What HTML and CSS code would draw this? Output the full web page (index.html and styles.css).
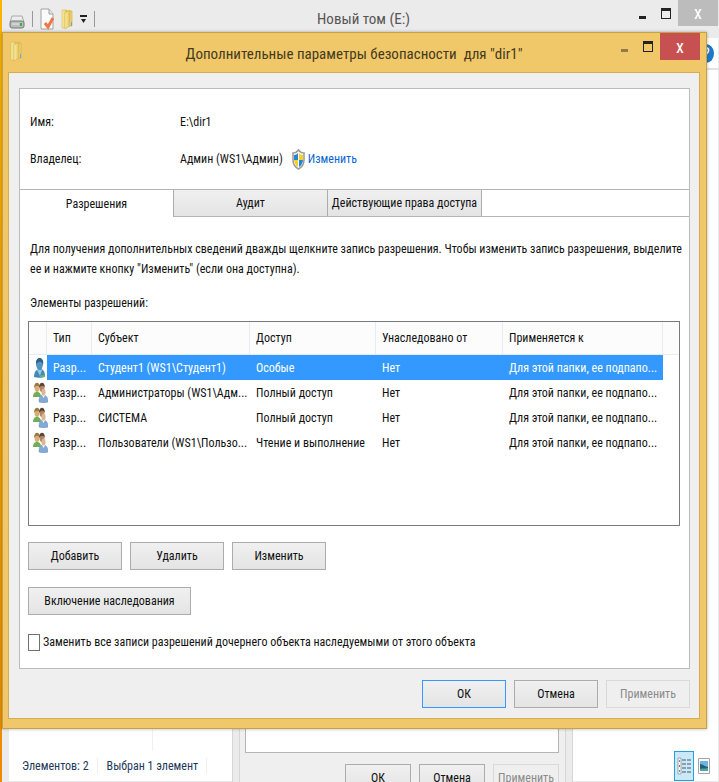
FILE: index.html
```html
<!DOCTYPE html>
<html lang="ru">

<head>
    <meta charset="UTF-8">
    <meta name="viewport" content="width=device-width, initial-scale=1.0">
    <title>Дополнительные параметры безопасности</title>
    <link rel="stylesheet" href="styles.css">
</head>

<body>
    <svg width="0" height="0" class="sprites">
        <defs>
            <linearGradient id="gold" x1="0" x2="1">
                <stop offset="0" stop-color="#fbf0a8" />
                <stop offset="1" stop-color="#e2bf55" />
            </linearGradient>
            <symbol id="folder" viewBox="0 0 12 21">
                <path d="M1 1h5v18H1z" fill="url(#gold)" stroke="#d9b95c" stroke-width=".6" />
                <path d="M6 2h5v15H6z" fill="#efd474" stroke="#d0a840" stroke-width=".6" />
                <path d="M4 4l5-3v16l-5 3z" fill="url(#gold)" stroke="#cfae4c" stroke-width=".5" />
                <path d="M10 13h1v4h-1z" fill="#6aaad8" />
            </symbol>
            <symbol id="group" viewBox="0 0 15 21">
                <path d="M0 15c0-4 2-5 4-5s4 1 4 5z" fill="#72ae56" />
                <ellipse cx="4" cy="6" rx="2.4" ry="4" fill="#d9ad76" />
                <path d="M1 6c0-7 6-7 6 0-1-3-4-3-6 0z" fill="#9a7a3a" />
                <ellipse cx="9" cy="6" rx="2.4" ry="4" fill="#b58463" />
                <path d="M6 6c0-7 6-7 6 0-1-3-4-3-6 0z" fill="#584434" />
                <path d="M6 20c0-5 1-7 4-7s5 2 5 7c-2 1-7 1-9 0z" fill="#83aad6" stroke="#5c84ad" stroke-width=".4" />
                <path d="M9 13l1.500 3 1.500-3z" fill="#fff" />
                <ellipse cx="10.500" cy="10" rx="2" ry="3.500" fill="#dcb78d" />
            </symbol>
        </defs>
    </svg>

    <div class="desktop">
        <section class="explorer">
            <header class="explorer-title">
                <div class="quick-bar">
                    <svg width="16" height="14" viewBox="0 0 16 14" class="drive">
                        <path d="M3 1h10l2 6H1z" fill="#ececec" stroke="#aaa" />
                        <rect x="1" y="6" width="14" height="7" rx="2" fill="#b9bcc0" stroke="#777" />
                        <path d="M3 9h7" stroke="#e9e9e9" />
                        <path d="M12 8v3" stroke="#36b832" stroke-width="2" />
                    </svg>
                    <i class="divider"></i>
                    <svg width="14" height="22" viewBox="0 0 14 22">
                        <path d="M1 1h8l4 5v15H1z" fill="#fafafa" stroke="#a2a2a2" />
                        <path d="M9 1v5h4" fill="#e3e3e3" stroke="#a2a2a2" />
                        <path d="M5 15l3 4 5-9" fill="none" stroke="#ed7846" stroke-width="3" />
                    </svg>
                    <svg width="12" height="21"><use href="#folder" /></svg>
                    <svg width="7" height="8" viewBox="0 0 7 8">
                        <path d="M0 1h7" stroke="#222" stroke-width="2" />
                        <path d="M1 4h5L3.500 8z" fill="#222" />
                    </svg>
                    <i class="divider"></i>
                </div>
                <span class="explorer-name">Новый том (E:)</span>
                <div class="window-buttons">
                    <button class="win-btn" aria-label="Свернуть"><i class="minimize"></i></button>
                    <button class="win-btn" aria-label="Развернуть"><i class="maximize"></i></button>
                    <button class="win-btn close" aria-label="Закрыть">x</button>
                </div>
            </header>
            <div class="ribbon">
                <button class="help" aria-label="Справка">?</button>
            </div>
            <div class="explorer-body">
                <div class="nav-pane"></div>
            </div>
            <footer class="status-bar">
                <span class="status-item">Элементов: 2</span>
                <span class="status-item">Выбран 1 элемент</span>
                <div class="view-modes">
                    <button class="view-btn selected" aria-label="Таблица">
                        <svg width="14" height="18" viewBox="0 0 14 18">
                            <path d="M1 1h3v16H1z" fill="#fff" stroke="#9aa7ad" />
                            <path d="M2 4h1M2 14h1" stroke="#7b8d95" stroke-width="2" />
                            <path d="M2 9h1" stroke="#e04f35" stroke-width="2" />
                            <path d="M5 3h9M5 7h9M5 11h9M5 15h9" stroke="#405b70" stroke-dasharray="4 1" />
                        </svg>
                    </button>
                    <button class="view-btn" aria-label="Крупные значки">
                        <svg width="12" height="16" viewBox="0 0 12 16">
                            <path d="M.5.5h11v15H.5z" fill="#fff" stroke="#9da6ac" />
                            <path d="M2 3h8v10H2z" fill="#6fb4e0" />
                            <path d="M2 6c3 0 5 3 8 3v4H2z" fill="#205f78" />
                            <path d="M2 11c3-1 5 0 8-1v3H2z" fill="#55a6a0" />
                        </svg>
                    </button>
                </div>
            </footer>
        </section>

        <section class="properties">
            <div class="properties-client">
                <div class="properties-page"></div>
                <div class="properties-actions">
                    <button class="btn">ОК</button>
                    <button class="btn">Отмена</button>
                    <button class="btn" disabled>Применить</button>
                </div>
            </div>
        </section>

        <section class="dialog">
            <header class="dialog-title">
                <svg width="12" height="21" class="dialog-icon"><use href="#folder" /></svg>
                <h1 class="dialog-name">Дополнительные параметры безопасности  для "dir1"</h1>
                <div class="window-buttons">
                    <button class="win-btn" aria-label="Свернуть"><i class="minimize faded"></i></button>
                    <button class="win-btn" aria-label="Развернуть"><i class="maximize"></i></button>
                    <button class="win-btn close" aria-label="Закрыть">x</button>
                </div>
            </header>

            <div class="client">
                <div class="panel">
                    <dl class="info">
                        <dt>Имя:</dt>
                        <dd>E:\dir1</dd>
                        <dt>Владелец:</dt>
                        <dd>
                            Админ (WS1\Админ)
                            <a class="change-link" href="#">
                                <svg width="13" height="21" viewBox="0 0 13 21">
                                    <path d="M6.500 1C5 3 3 4 1 4v7c0 4 2 7 5.500 9C10 18 12 15 12 11V4C10 4 8 3 6.500 1z" fill="#fff" stroke="#9a9a92" stroke-width="1.500" />
                                    <path d="M6 4C5 5 3.500 6 2 6v5h4z" fill="#2785d6" />
                                    <path d="M7 4c1 1 2.500 2 4 2v5H7z" fill="#f5cf2d" />
                                    <path d="M2 11h4v7c-2-1-4-4-4-7z" fill="#f5cf2d" />
                                    <path d="M11 11H7v7c2-1 4-4 4-7z" fill="#2785d6" />
                                </svg>
                                Изменить
                            </a>
                        </dd>
                    </dl>

                    <div class="tabs" role="tablist">
                        <button class="tab active" role="tab" aria-selected="true">Разрешения</button>
                        <button class="tab" role="tab">Аудит</button>
                        <button class="tab" role="tab">Действующие права доступа</button>
                    </div>

                    <div class="page">
                        <p class="hint">Для получения дополнительных сведений дважды щелкните запись разрешения. Чтобы изменить запись разрешения, выделите ее и нажмите кнопку "Изменить" (если она доступна).</p>
                        <p class="list-label" id="list-label">Элементы разрешений:</p>

                        <div class="list">
                            <table class="entries" aria-labelledby="list-label">
                                <colgroup>
                                    <col class="col-icon">
                                    <col class="col-type">
                                    <col class="col-subject">
                                    <col class="col-access">
                                    <col class="col-from">
                                    <col class="col-applies">
                                    <col>
                                </colgroup>
                                <thead>
                                    <tr>
                                        <th></th>
                                        <th>Тип</th>
                                        <th>Субъект</th>
                                        <th>Доступ</th>
                                        <th>Унаследовано от</th>
                                        <th>Применяется к</th>
                                        <th></th>
                                    </tr>
                                </thead>
                                <tbody>
                                    <tr class="selected">
                                        <td>
                                            <svg width="15" height="21" viewBox="0 0 15 21">
                                                <path d="M1 20c0-6 3-8 6-8s5 2 5 8c-3 1-8 1-11 0z" fill="#4389b8" />
                                                <path d="M4 13l3 6 2-6z" fill="#8fcbe8" />
                                                <ellipse cx="6.500" cy="7" rx="3.500" ry="6" fill="#5494bd" />
                                                <path d="M3 7c-1-8 9-8 7 1-1-4-4-4-7-1z" fill="#2c628c" />
                                                <path d="M7 20c1-3 4-2 5-1v1z" fill="#6db954" />
                                            </svg>
                                        </td>
                                        <td>Разр...</td>
                                        <td>Студент1 (WS1\Студент1)</td>
                                        <td>Особые</td>
                                        <td>Нет</td>
                                        <td>Для этой папки, ее подпапо...</td>
                                        <td></td>
                                    </tr>
                                    <tr>
                                        <td><svg width="15" height="21"><use href="#group" /></svg></td>
                                        <td>Разр...</td>
                                        <td>Администраторы (WS1\Адм...</td>
                                        <td>Полный доступ</td>
                                        <td>Нет</td>
                                        <td>Для этой папки, ее подпапо...</td>
                                        <td></td>
                                    </tr>
                                    <tr>
                                        <td><svg width="15" height="21"><use href="#group" /></svg></td>
                                        <td>Разр...</td>
                                        <td>СИСТЕМА</td>
                                        <td>Полный доступ</td>
                                        <td>Нет</td>
                                        <td>Для этой папки, ее подпапо...</td>
                                        <td></td>
                                    </tr>
                                    <tr>
                                        <td><svg width="15" height="21"><use href="#group" /></svg></td>
                                        <td>Разр...</td>
                                        <td>Пользователи (WS1\Пользо...</td>
                                        <td>Чтение и выполнение</td>
                                        <td>Нет</td>
                                        <td>Для этой папки, ее подпапо...</td>
                                        <td></td>
                                    </tr>
                                </tbody>
                            </table>
                        </div>

                        <div class="actions">
                            <button class="btn">Добавить</button>
                            <button class="btn">Удалить</button>
                            <button class="btn">Изменить</button>
                        </div>
                        <button class="btn inherit">Включение наследования</button>
                        <label class="replace">
                            <input type="checkbox">
                            Заменить все записи разрешений дочернего объекта наследуемыми от этого объекта
                        </label>
                    </div>
                </div>

                <div class="dialog-actions">
                    <button class="btn default">ОК</button>
                    <button class="btn">Отмена</button>
                    <button class="btn" disabled>Применить</button>
                </div>
            </div>
        </section>
    </div>
</body>

</html>
```
FILE: styles.css
```css
* {
    box-sizing: border-box;
}

body {
    margin: 0;
    font-family: "Roboto Condensed", Roboto, sans-serif;
    font-size: 12px;
    line-height: 20px;
    color: #111;
}

button,
input {
    font: inherit;
    color: inherit;
    margin: 0;
    padding: 0;
}

svg {
    display: block;
    flex: none;
}

.sprites {
    position: absolute;
}

.desktop {
    position: relative;
    height: 100vh;
    min-height: 782px;
    padding-left: 2px;
    overflow: hidden;
    background: linear-gradient(#fbb400, #ec8a00);
}

/* explorer window */
.explorer {
    display: flex;
    flex-direction: column;
    height: 100%;
    padding: 0 1px 1px 7px;
    background: #ebebeb;
}

.explorer-title {
    position: relative;
    display: flex;
    justify-content: center;
    height: 38px;
    color: #555;
}

.quick-bar {
    position: absolute;
    left: 0;
    top: 8px;
    display: flex;
    align-items: center;
    gap: 7px;
}

.quick-bar .drive {
    margin-top: 6px;
}

.divider {
    width: 1px;
    height: 16px;
    background: #999;
}

.explorer-name {
    font-size: 15px;
    line-height: 38px;
}

.window-buttons {
    position: absolute;
    top: 0;
    right: 0;
    display: flex;
}

.win-btn {
    display: flex;
    align-items: center;
    justify-content: center;
    width: 24px;
    height: 26px;
    border: 0;
    background: none;
    font-size: 18px;
}

.win-btn.close {
    width: 40px;
    color: #fff;
    background: #bcbcbc;
}

.minimize {
    width: 7px;
    height: 3px;
    margin-top: 8px;
    background: #222;
}

.minimize.faded {
    background: #94794a;
}

.maximize {
    width: 10px;
    height: 11px;
    border: 1px solid #222;
    border-top-width: 3px;
}

.ribbon {
    display: flex;
    justify-content: flex-end;
    height: 32px;
    padding: 6px 4px 0 0;
    background: #fff;
    border-bottom: 2px solid #e2e2e2;
}

.help {
    width: 16px;
    height: 19px;
    border: 0;
    border-radius: 50%;
    color: #fff;
    background: #1979ca;
    font-size: 18px;
    line-height: 19px;
}

.explorer-body {
    flex: 1;
    background: #fff;
}

.nav-pane {
    width: 144px;
    height: 100%;
    border-right: 1px solid #f0f0f0;
}

.status-bar {
    display: flex;
    align-items: center;
    height: 30px;
    padding-left: 13px;
    background: #fff;
    color: #1e395b;
}

.status-item {
    padding-right: 8px;
    margin-right: 9px;
    border-right: 1px solid #eee;
    line-height: 16px;
}

.view-modes {
    display: flex;
    margin-left: auto;
    padding-right: 4px;
}

.view-btn {
    display: flex;
    align-items: center;
    justify-content: center;
    width: 20px;
    height: 30px;
    border: 0;
    background: none;
}

.view-btn.selected {
    border: 1px solid #26a0da;
    background: #cbe8f6;
}

/* properties window behind the dialog */
.properties {
    position: absolute;
    left: 232px;
    bottom: 0;
    width: 341px;
    height: 60px;
    padding: 0 6px;
    overflow: hidden;
    background: #ebebeb;
    border: 1px solid #d6d6d6;
    border-width: 0 1px;
}

.properties-client {
    height: 60px;
    padding: 0 6px 0 5px;
    background: #efefef;
    border: 1px solid #d6d6d6;
    border-width: 0 1px;
}

.properties-page {
    height: 31px;
    background: #fff;
    border: 1px solid #b5b5b5;
}

.properties-actions {
    display: flex;
    justify-content: flex-end;
    gap: 8px;
    padding-top: 11px;
}

.properties-actions .btn {
    width: 66px;
}

/* main dialog */
.dialog {
    position: absolute;
    left: 2px;
    right: 12px;
    top: 32px;
    padding: 0 6px 9px 5px;
    background: #f0c869;
    border: 1px solid #c7a04a;
    box-shadow: 0 0 3px rgba(0, 0, 0, .3);
}

.dialog-title {
    position: relative;
    display: flex;
    justify-content: center;
    height: 39px;
    color: #443a20;
}

.dialog-icon {
    position: absolute;
    left: 2px;
    top: 8px;
}

.dialog-name {
    margin: 0;
    font-size: 15px;
    font-weight: 400;
    line-height: 42px;
    white-space: pre;
}

.dialog .win-btn {
    height: 27px;
}

.dialog .win-btn.close {
    background: #c75050;
}

.client {
    padding: 15px 9px 10px 10px;
    background: #efefef;
    border: 1px solid #d3ac56;
}

.panel {
    background: #fff;
    border: 1px solid #bcbcbc;
}

.info {
    display: grid;
    grid-template-columns: 150px 1fr;
    row-gap: 17px;
    margin: 0;
    padding: 23px 10px 20px;
}

.info dd {
    display: flex;
    gap: 9px;
    margin: 0;
}

.change-link {
    display: flex;
    gap: 3px;
    height: 20px;
    color: #0a66d0;
    text-decoration: none;
}

.tabs {
    display: flex;
    border-top: 1px solid #b5b5b5;
    border-bottom: 1px solid #b5b5b5;
}

.tab {
    width: 154px;
    height: 26px;
    border: 0;
    border-right: 1px solid #acacac;
    background: linear-gradient(#f0f0f0, #e4e4e4);
    white-space: nowrap;
}

.tab.active {
    height: 27px;
    margin-bottom: -1px;
    background: #fff;
}

.page {
    padding: 22px 9px 16px 8px;
}

.hint {
    margin: 0 -8px 14px 2px;
}

.list-label {
    margin: 0 2px 8px;
}

.list {
    height: 205px;
    border: 1px solid #7a7a7a;
    overflow: hidden;
}

.entries {
    width: 100%;
    table-layout: fixed;
    border-collapse: separate;
    border-spacing: 0;
}

.col-icon {
    width: 18px;
}

.col-type {
    width: 45px;
}

.col-subject {
    width: 158px;
}

.col-access {
    width: 126px;
}

.col-from {
    width: 127px;
}

.col-applies {
    width: 160px;
}

.entries th,
.entries td {
    height: 25px;
    padding: 0 0 0 6px;
    text-align: left;
    font-weight: 400;
    white-space: nowrap;
}

.entries th {
    height: 33px;
    background: #fcfcfc;
    border-right: 1px solid #e3edf6;
    border-bottom: 1px solid #e3edf6;
}

.entries th:last-child {
    border-right: 0;
}

.entries td:first-child {
    padding-left: 4px;
}

.entries .selected td {
    color: #fff;
    background: #3399ff;
}

.entries .selected td:first-child,
.entries .selected td:last-child {
    background: none;
}

.btn {
    height: 28px;
    border: 1px solid #acacac;
    background: linear-gradient(#f0f0f0, #e4e4e4);
    white-space: nowrap;
}

.btn.default {
    border-color: #3399ff;
}

.btn:disabled {
    color: #8b8b8b;
    background: #efefef;
    border-color: #d9d9d9;
}

.actions {
    display: flex;
    gap: 8px;
    margin: 16px 0 17px;
}

.actions .btn {
    width: 94px;
}

.inherit {
    width: 163px;
}

.replace {
    display: flex;
    align-items: center;
    gap: 3px;
    margin-top: 17px;
    white-space: nowrap;
}

.replace input {
    appearance: none;
    width: 12px;
    height: 17px;
    border: 1px solid #707070;
    background: #fff;
}

.dialog-actions {
    display: flex;
    justify-content: flex-end;
    gap: 8px;
    padding-top: 11px;
}

.dialog-actions .btn {
    width: 84px;
}
```
